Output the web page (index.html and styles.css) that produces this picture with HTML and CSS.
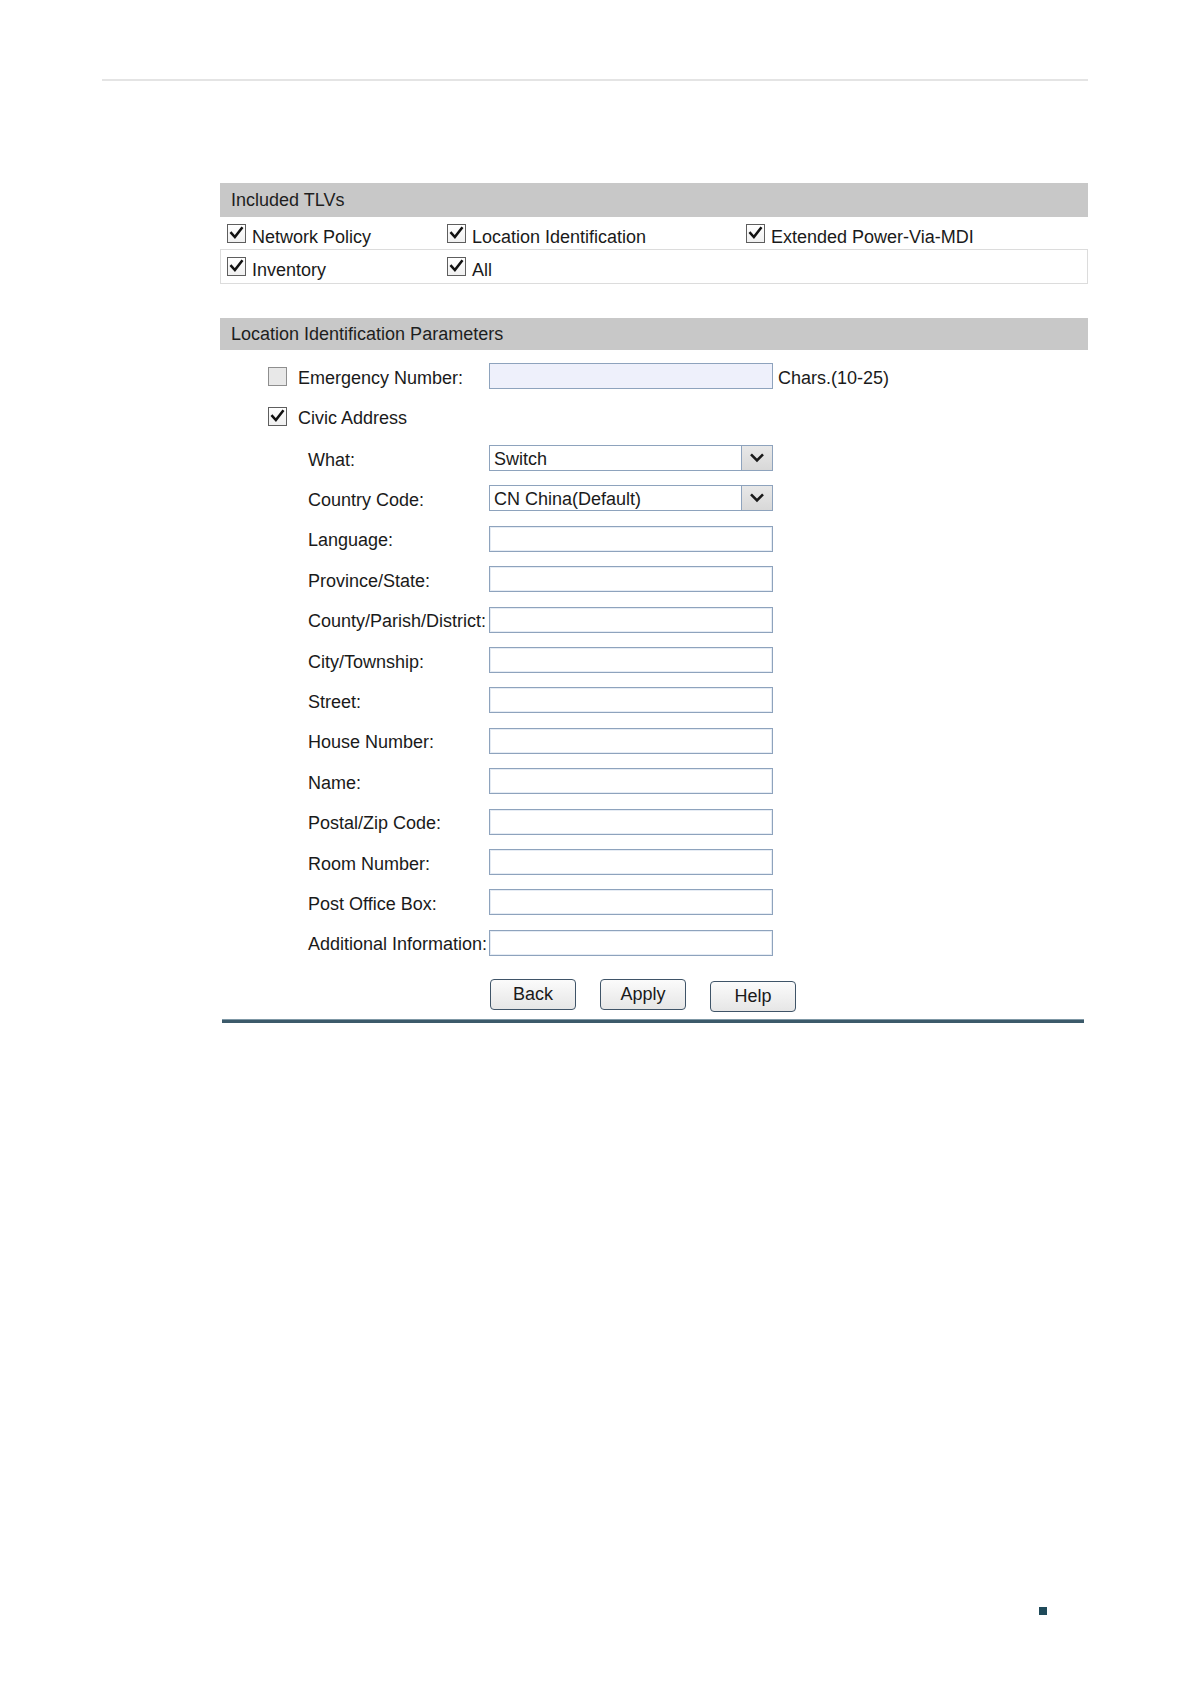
FILE: index.html
```html
<!DOCTYPE html>
<html lang="en">
<head>
<meta charset="utf-8">
<title>Location Identification Parameters</title>
<link rel="stylesheet" href="styles.css">
</head>
<body>
<div class="page">
  <div class="topline"></div>

  <div class="panel">
    <div class="sec-head">Included TLVs</div>
    <div class="tlv-row first">
      <label class="cell"><span class="cb checked"><svg viewBox="0 0 18 18"><path d="M3.5 8.5 L7.3 12.8 L14.5 3.5"/></svg></span><span class="txt">Network Policy</span></label>
      <label class="cell"><span class="cb checked"><svg viewBox="0 0 18 18"><path d="M3.5 8.5 L7.3 12.8 L14.5 3.5"/></svg></span><span class="txt">Location Identification</span></label>
      <label class="cell"><span class="cb checked"><svg viewBox="0 0 18 18"><path d="M3.5 8.5 L7.3 12.8 L14.5 3.5"/></svg></span><span class="txt">Extended Power-Via-MDI</span></label>
    </div>
    <div class="tlv-row second">
      <label class="cell"><span class="cb checked"><svg viewBox="0 0 18 18"><path d="M3.5 8.5 L7.3 12.8 L14.5 3.5"/></svg></span><span class="txt">Inventory</span></label>
      <label class="cell"><span class="cb checked"><svg viewBox="0 0 18 18"><path d="M3.5 8.5 L7.3 12.8 L14.5 3.5"/></svg></span><span class="txt">All</span></label>
    </div>

    <div class="sec-head second-head">Location Identification Parameters</div>

    <div class="params">
      <div class="opt-row">
        <span class="cb unchecked"></span>
        <span class="opt-label txt">Emergency Number:</span>
        <span class="field disabled"></span>
        <span class="hint txt">Chars.(10-25)</span>
      </div>
      <div class="opt-row civic">
        <span class="cb checked"><svg viewBox="0 0 18 18"><path d="M3.5 8.5 L7.3 12.8 L14.5 3.5"/></svg></span>
        <span class="opt-label txt">Civic Address</span>
      </div>

      <div class="fields">
        <span class="f-label txt">What:</span>
        <span class="field select"><span class="sel-text">Switch</span><span class="sel-btn"><svg viewBox="0 0 30 26"><path d="M8.5 9 L15 15.5 L21.5 9"/></svg></span></span>

        <span class="f-label txt">Country Code:</span>
        <span class="field select"><span class="sel-text">CN China(Default)</span><span class="sel-btn"><svg viewBox="0 0 30 26"><path d="M8.5 9 L15 15.5 L21.5 9"/></svg></span></span>

        <span class="f-label txt">Language:</span><span class="field"></span>
        <span class="f-label txt">Province/State:</span><span class="field"></span>
        <span class="f-label txt">County/Parish/District:</span><span class="field"></span>
        <span class="f-label txt">City/Township:</span><span class="field"></span>
        <span class="f-label txt">Street:</span><span class="field"></span>
        <span class="f-label txt">House Number:</span><span class="field"></span>
        <span class="f-label txt">Name:</span><span class="field"></span>
        <span class="f-label txt">Postal/Zip Code:</span><span class="field"></span>
        <span class="f-label txt">Room Number:</span><span class="field"></span>
        <span class="f-label txt">Post Office Box:</span><span class="field"></span>
        <span class="f-label txt">Additional Information:</span><span class="field"></span>
      </div>

      <div class="buttons">
        <span class="btn">Back</span>
        <span class="btn">Apply</span>
        <span class="btn low">Help</span>
      </div>
    </div>

    <div class="bottomline"></div>
  </div>

  <div class="footer-mark"></div>
</div>
</body>
</html>
```

FILE: styles.css
```css
html, body {
  margin: 0;
  padding: 0;
  background: #ffffff;
}

body {
  font-family: "Liberation Sans", Arial, sans-serif;
  font-size: 18px;
  color: #1a1a1a;
}

.page {
  width: 1191px;
  height: 1684px;
  padding-top: 79px;
  box-sizing: border-box;
  overflow: hidden;
}

.topline {
  margin-left: 102px;
  width: 986px;
  height: 2px;
  background: #e4e4e4;
}

.panel {
  margin: 102px 0 0 220px;
  width: 868px;
}

.sec-head {
  height: 34px;
  line-height: 34px;
  padding-left: 11px;
  background: #c8c8c8;
  color: #1e1e1e;
}

.second-head {
  margin-top: 34px;
  height: 32px;
  line-height: 32px;
}

.tlv-row {
  display: grid;
  grid-template-columns: 220px 299px 1fr;
  height: 33px;
  padding-left: 7px;
  box-sizing: border-box;
  border-bottom: 1px solid #dcdcdc;
}

.tlv-row.second {
  height: 34px;
  border-left: 1px solid #dcdcdc;
  border-right: 1px solid #dcdcdc;
  padding-left: 6px;
}

.cell {
  display: flex;
  align-items: center;
  gap: 6px;
}

.txt {
  position: relative;
  top: 2px;
  white-space: nowrap;
}

.cell .txt {
  top: 4px;
}

.cb {
  width: 19px;
  height: 19px;
  box-sizing: border-box;
  flex: none;
  display: inline-flex;
  border: 1px solid #5e5e5e;
  background: linear-gradient(#ffffff, #f0f0f0);
}

.cb svg {
  width: 17px;
  height: 17px;
}

.cb svg path {
  fill: none;
  stroke: #111111;
  stroke-width: 2.7;
  stroke-linecap: square;
  stroke-linejoin: miter;
}

.cb.unchecked {
  border-color: #8e8e8e;
  background: #e8e8e8;
}

.params {
  padding-left: 48px;
}

.opt-row {
  display: flex;
  align-items: center;
  height: 26px;
  margin-top: 13px;
}

.opt-row.civic {
  margin-top: 14px;
}

.opt-label {
  width: 202px;
  padding-left: 11px;
  box-sizing: border-box;
}

.hint {
  margin-left: 5px;
}

.field {
  display: flex;
  width: 284px;
  height: 26px;
  box-sizing: border-box;
  border: 1px solid #8ea3bd;
  background: #ffffff;
  box-shadow: inset 0 0 0 1px #e6ecf4;
}

.field.disabled {
  background: #eef0fb;
  box-shadow: none;
}

.fields {
  display: grid;
  grid-template-columns: 181px 284px;
  grid-auto-rows: 26px;
  row-gap: 14.42px;
  margin-top: 16px;
  margin-left: 40px;
  align-items: center;
}

.f-label {
  white-space: nowrap;
}

.field.select {
  align-items: stretch;
  box-shadow: none;
}

.sel-text {
  flex: 1;
  padding-left: 4px;
  line-height: 24px;
  position: relative;
  top: 1px;
}

.sel-btn {
  width: 30px;
  flex: none;
  background: linear-gradient(#e8e8e8, #d8d8d8);
  border-left: 1px solid #8ea3bd;
  display: flex;
}

.sel-btn svg {
  width: 30px;
  height: 24px;
}

.sel-btn svg path {
  fill: none;
  stroke: #1a1a1a;
  stroke-width: 2.8;
}

.buttons {
  display: flex;
  gap: 24px;
  margin-top: 23px;
  margin-left: 222px;
  align-items: flex-start;
}

.btn {
  width: 86px;
  height: 31px;
  box-sizing: border-box;
  border: 1px solid #3f5468;
  border-radius: 4px;
  background: linear-gradient(#fbfbfb, #e6e6e6);
  display: flex;
  align-items: center;
  justify-content: center;
  line-height: 1;
  color: #1a1a1a;
}

.btn.low {
  margin-top: 2px;
}

.bottomline {
  margin: 7px 0 0 2px;
  width: 862px;
  height: 3px;
  background: #3c5a6a;
  border-top: 1px solid #7f98a6;
}

.footer-mark {
  margin: 584px 0 0 1039px;
  width: 8px;
  height: 8px;
  background: #1f4a5a;
}
```
